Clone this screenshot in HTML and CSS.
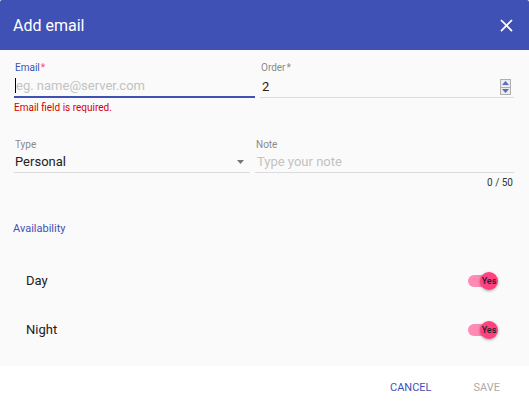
FILE: index.html
```html
<!DOCTYPE html>
<html>
<head>
<meta charset="utf-8">
<link rel="stylesheet" href="styles.css">
</head>
<body>
<div class="dialog">
  <header class="dlg-head">
    <h1 class="dlg-title">Add email</h1>
    <button class="close" aria-label="Close">
      <svg viewBox="0 0 24 24" width="21" height="21"><path fill="#fff" d="M19 6.41L17.59 5 12 10.59 6.41 5 5 6.41 10.59 12 5 17.59 6.41 19 12 13.41 17.59 19 19 17.59 13.41 12z"/></svg>
    </button>
  </header>
  <main class="dlg-body">
    <div class="row row-one">
      <div class="field f-email">
        <label class="lbl lbl-focus">Email<span class="req">*</span></label>
        <div class="control ctl-focus"><span class="caret"></span><span class="ph">eg. name@server.com</span></div>
        <div class="error">Email field is required.</div>
      </div>
      <div class="field f-order">
        <label class="lbl">Order<span class="req-gray">*</span></label>
        <div class="control ctl-order">
          <span class="val">2</span>
          <span class="spin">
            <span class="spin-btn"><svg width="7" height="4" viewBox="0 0 7 4"><path d="M0 4L3.5 0 7 4z" fill="#5c6bc0"/></svg></span>
            <span class="spin-btn"><svg width="7" height="4" viewBox="0 0 7 4"><path d="M0 0L3.5 4 7 0z" fill="#5c6bc0"/></svg></span>
          </span>
        </div>
      </div>
    </div>
    <div class="row row-two">
      <div class="field f-type">
        <label class="lbl">Type</label>
        <div class="control ctl-plain">
          <span class="val">Personal</span>
          <svg class="arrow" width="7" height="4" viewBox="0 0 7 4"><path d="M0 0L3.5 4 7 0z" fill="#757575"/></svg>
        </div>
      </div>
      <div class="field f-note">
        <label class="lbl">Note</label>
        <div class="control ctl-plain ctl-note"><span class="ph">Type your note</span></div>
        <div class="counter">0 / 50</div>
      </div>
    </div>
    <div class="section-title">Availability</div>
    <div class="avail-row">
      <span class="avail-label">Day</span>
      <span class="toggle"><span class="track"></span><span class="thumb">Yes</span></span>
    </div>
    <div class="avail-row">
      <span class="avail-label">Night</span>
      <span class="toggle"><span class="track"></span><span class="thumb">Yes</span></span>
    </div>
  </main>
  <footer class="dlg-foot">
    <button class="btn btn-primary">CANCEL</button>
    <button class="btn btn-disabled">SAVE</button>
  </footer>
</div>
</body>
</html>
```
FILE: styles.css
```css
html, body {
  margin: 0;
  padding: 0;
  background: #ffffff;
}
body {
  font-family: Roboto, "Liberation Sans", Arial, sans-serif;
  color: #212121;
}
.dialog {
  width: 529px;
  height: 408px;
  display: flex;
  flex-direction: column;
  overflow: hidden;
  border-radius: 2px 2px 0 0;
}
.dlg-head {
  height: 50px;
  flex: 0 0 50px;
  background: #3f51b5;
  display: flex;
  align-items: center;
  justify-content: space-between;
  padding: 0 12px 0 13px;
}
.dlg-title {
  margin: 0;
  font-size: 16px;
  font-weight: 400;
  color: #ffffff;
}
.close {
  border: 0;
  background: transparent;
  padding: 0;
  width: 21px;
  height: 21px;
  display: flex;
}
.dlg-body {
  flex: 1 1 auto;
  background: #fafafa;
  padding: 11px 15px 0 14px;
}
.row {
  display: flex;
  gap: 5px;
}
.row-one {
  height: 77px;
}
.f-email {
  width: 241px;
}
.f-order {
  flex: 1;
}
.f-type {
  width: 236px;
}
.f-note {
  flex: 1;
}
.field {
  display: flex;
  flex-direction: column;
}
.lbl {
  font-size: 10px;
  line-height: 14px;
  height: 14px;
  color: #8a8a8a;
  padding-left: 1px;
}
.lbl-focus {
  color: #3f51b5;
}
.req {
  color: #ff4081;
  margin-left: 1px;
}
.req-gray {
  color: #8a8a8a;
  margin-left: 1px;
}
.control {
  display: flex;
  align-items: center;
  font-size: 13px;
  line-height: 21px;
  height: 21px;
  padding-left: 1px;
  position: relative;
}
.ctl-focus {
  border-bottom: 2px solid #3f51b5;
}
.ctl-order {
  height: 22px;
  border-bottom: 1px solid #dcdcdc;
  padding-left: 2px;
  justify-content: space-between;
  padding-right: 3px;
}
.ctl-plain {
  height: 20px;
  line-height: 20px;
  border-bottom: 1px solid #dcdcdc;
  justify-content: space-between;
}
.ctl-note {
  line-height: 18px;
  padding-left: 2px;
}
.caret {
  display: inline-block;
  width: 1px;
  height: 15px;
  background: #000;
  margin-right: 0;
}
.ph {
  color: #c2c2c2;
}
.val {
  color: #212121;
}
.arrow {
  margin-right: 6px;
}
.spin {
  display: flex;
  flex-direction: column;
  width: 11px;
  height: 16px;
  margin-top: 2px;
}
.spin-btn {
  flex: 1;
  box-sizing: border-box;
  border: 1px solid #b0b0b0;
  background: #ececec;
  display: flex;
  align-items: center;
  justify-content: center;
}
.spin-btn + .spin-btn {
  border-top: 0;
}
.error {
  margin-top: 4px;
  font-size: 10px;
  line-height: 12px;
  color: #d50000;
}
.counter {
  margin-top: 4px;
  font-size: 10px;
  line-height: 12px;
  text-align: right;
  color: #333333;
  padding-right: 1px;
}
.section-title {
  margin-top: 33px;
  font-size: 11px;
  line-height: 14px;
  color: #3f51b5;
  margin-left: -1px;
}
.avail-row {
  display: flex;
  align-items: center;
  justify-content: space-between;
  height: 49px;
  padding-left: 12px;
  padding-right: 16px;
}
.section-title + .avail-row {
  margin-top: 20px;
}
.avail-label {
  font-size: 13px;
  color: #212121;
}
.toggle {
  position: relative;
  width: 30px;
  height: 18px;
  display: block;
}
.track {
  position: absolute;
  left: 0;
  top: 3px;
  width: 26px;
  height: 12px;
  border-radius: 6px;
  background: #ff8ab3;
}
.thumb {
  position: absolute;
  right: 0;
  top: 0;
  width: 18px;
  height: 18px;
  border-radius: 50%;
  background: #ff4081;
  box-shadow: 0 1px 3px rgba(0, 0, 0, 0.35);
  font-size: 9px;
  font-weight: 500;
  line-height: 18px;
  text-align: center;
  color: #222;
  white-space: nowrap;
}
.dlg-foot {
  flex: 0 0 42px;
  height: 42px;
  background: #ffffff;
  display: flex;
  align-items: center;
  justify-content: flex-end;
  gap: 42px;
  padding-right: 29px;
}
.btn {
  border: 0;
  background: transparent;
  padding: 0;
  font-family: Roboto, "Liberation Sans", Arial, sans-serif;
  font-size: 11px;
  line-height: 13px;
  margin-top: 1px;
}
.btn-primary {
  color: #3f51b5;
}
.btn-disabled {
  color: #ababab;
}
```
